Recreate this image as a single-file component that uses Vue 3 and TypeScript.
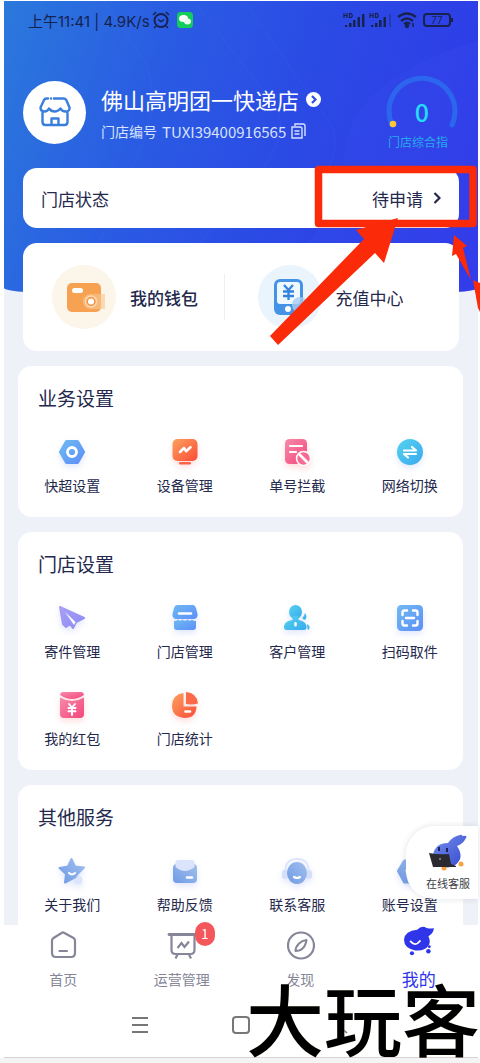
<script setup lang="ts">
interface Entry {
  icon: string
  label: string
}
interface Section {
  title: string
  entries: Entry[]
}
interface Tab extends Entry {
  badge?: number
  active?: boolean
}

const sections: Section[] = [
  {
    title: '业务设置',
    entries: [
      { icon: 'hex', label: '快超设置' },
      { icon: 'device', label: '设备管理' },
      { icon: 'block', label: '单号拦截' },
      { icon: 'switch', label: '网络切换' },
    ],
  },
  {
    title: '门店设置',
    entries: [
      { icon: 'plane', label: '寄件管理' },
      { icon: 'shop', label: '门店管理' },
      { icon: 'people', label: '客户管理' },
      { icon: 'scan', label: '扫码取件' },
      { icon: 'packet', label: '我的红包' },
      { icon: 'pie', label: '门店统计' },
    ],
  },
  {
    title: '其他服务',
    entries: [
      { icon: 'star', label: '关于我们' },
      { icon: 'mail', label: '帮助反馈' },
      { icon: 'headset', label: '联系客服' },
      { icon: 'account', label: '账号设置' },
    ],
  },
]

const tabs: Tab[] = [
  { icon: 'home', label: '首页' },
  { icon: 'board', label: '运营管理', badge: 1 },
  { icon: 'compass', label: '发现' },
  { icon: 'mascot', label: '我的', active: true },
]
</script>

<template>
  <div class="page">
    <svg class="sprite" width="0" height="0" aria-hidden="true">
      <defs>
        <linearGradient id="g-blue" x1="0" y1="0" x2="1" y2="1"><stop offset="0" stop-color="#70b9f2" /><stop offset="1" stop-color="#5c8ff8" /></linearGradient>
        <linearGradient id="g-orange" x1="0" y1="0" x2="1" y2="1"><stop offset="0" stop-color="#fba25e" /><stop offset="1" stop-color="#fb4b37" /></linearGradient>
        <linearGradient id="g-pink" x1="0" y1="0" x2="1" y2="1"><stop offset="0" stop-color="#f58bab" /><stop offset="1" stop-color="#f5457c" /></linearGradient>
        <linearGradient id="g-cyan" x1="0" y1="0" x2="1" y2="1"><stop offset="0" stop-color="#55d3ee" /><stop offset="1" stop-color="#39a9ee" /></linearGradient>
        <linearGradient id="g-violet" x1="0" y1="0" x2="1" y2="1"><stop offset="0" stop-color="#a99ff5" /><stop offset="1" stop-color="#8d8bf4" /></linearGradient>
        <linearGradient id="g-soft" x1="0" y1="1" x2="1" y2="0"><stop offset="0" stop-color="#6f9be4" /><stop offset="1" stop-color="#a3c0ee" /></linearGradient>
        <linearGradient id="g-mascot" x1="0" y1="0" x2="1" y2="1"><stop offset="0" stop-color="#7490ee" /><stop offset="1" stop-color="#3548cc" /></linearGradient>
      </defs>
      <symbol id="i-hex" viewBox="0 0 30 30">
        <path d="M9.500 4.500h11L26.500 15l-6 10.500h-11L3.500 15z" fill="url(#g-blue)" stroke="url(#g-blue)" stroke-width="3" stroke-linejoin="round" />
        <circle cx="15" cy="15" r="4.500" fill="none" stroke="#fff" stroke-width="2.800" />
      </symbol>
      <symbol id="i-device" viewBox="0 0 30 30">
        <rect x="2.500" y="2" width="25" height="22" rx="5" fill="url(#g-orange)" />
        <rect x="9" y="25" width="12" height="2.500" rx="1.200" fill="#fb6347" />
        <path d="M10 15l4-4 2 3.200 4.500-4" fill="none" stroke="#fff" stroke-width="2.500" stroke-linecap="round" stroke-linejoin="round" />
      </symbol>
      <symbol id="i-block" viewBox="0 0 30 30">
        <rect x="3" y="2" width="22" height="25" rx="4.500" fill="url(#g-pink)" />
        <path d="M8 9h12M8 15h6" stroke="#fff" stroke-width="2.200" stroke-linecap="round" />
        <circle cx="21.500" cy="21.500" r="7" fill="#f56b95" stroke="#fff" stroke-width="1.500" />
        <path d="M17 17l9 9" stroke="#fff" stroke-width="2.600" />
      </symbol>
      <symbol id="i-switch" viewBox="0 0 30 30">
        <circle cx="15" cy="15" r="13" fill="url(#g-cyan)" />
        <path d="M9 13.500h12l-4-3.500M21 17H9l4 3.500" fill="none" stroke="#fff" stroke-width="2.200" stroke-linecap="round" stroke-linejoin="round" />
      </symbol>
      <symbol id="i-plane" viewBox="0 0 30 30">
        <path d="M3 4l24 11-8 4-3 6-3-4-4 3-3-3z" fill="url(#g-violet)" stroke="url(#g-violet)" stroke-width="2" stroke-linejoin="round" />
        <path d="M8 9l9 13 1.500-3z" fill="#fff" />
      </symbol>
      <symbol id="i-shop" viewBox="0 0 30 30">
        <path d="M7 2h16q2 0 3 3l1.500 6q.5 4-3 5h-19q-3.500-1-3-5L4 5q1-3 3-3z" fill="url(#g-blue)" />
        <path d="M4 18q3 0 4-1.500 2 2.500 4.500 0 2.500 2.500 5 0 2.500 2.500 4.500 0 1 1.500 4 1.500v6q0 3-3 3H7q-3 0-3-3z" fill="url(#g-blue)" />
        <path d="M9 10.500h12" stroke="#fff" stroke-width="2.400" stroke-linecap="round" />
      </symbol>
      <symbol id="i-people" viewBox="0 0 30 30">
        <ellipse cx="13.500" cy="9" rx="6.500" ry="7" fill="url(#g-cyan)" />
        <path d="M10.500 13h6v4q7 1 8 6v1.500q0 2.500-3 2.500H5q-3 0-3-2.500V23q1-5 8.500-6z" fill="url(#g-cyan)" />
        <rect x="12.300" y="19" width="2.400" height="4.500" rx="1.200" fill="#fff" />
        <path d="M23 10q3 4 0 7-3-.5-2.500-2.500 2-1.500 2.500-4.500zM25 21q4 2 2 5.500h-1.500z" fill="#44b8ee" />
      </symbol>
      <symbol id="i-scan" viewBox="0 0 30 30">
        <rect x="2" y="2" width="26" height="26" rx="4.500" fill="url(#g-blue)" />
        <path d="M12 7.500H9.500q-2 0-2 2V12M18 7.500h2.500q2 0 2 2V12M7.500 18v2.500q0 2 2 2H12M22.500 18v2.500q0 2-2 2H18M11 15h8" fill="none" stroke="#fff" stroke-width="2.400" stroke-linecap="round" />
      </symbol>
      <symbol id="i-packet" viewBox="0 0 30 30">
        <path d="M6 2h18q2.500 0 3 3-12 8-24 0 .5-3 3-3z" fill="url(#g-pink)" />
        <path d="M3 7.500q12 7 24 0V24q0 4-4 4H7q-4 0-4-4z" fill="url(#g-pink)" />
        <path d="M12 14l3 3.500 3-3.500M15 17.500V25M11.500 18h7M11.500 21.300h7" fill="none" stroke="#fff" stroke-width="1.900" stroke-linecap="round" />
      </symbol>
      <symbol id="i-pie" viewBox="0 0 30 30">
        <path d="M13.500 3v13.500h13Q26 28 14.500 28 2 27 2 15.500 2.500 4.500 13.500 3z" fill="url(#g-orange)" />
        <path d="M16 2q11 1 12 11.500-6 1.500-12 .5z" fill="#fb6a48" />
        <path d="M15.500 21.500H20" stroke="#fff" stroke-width="2.600" stroke-linecap="round" />
      </symbol>
      <symbol id="i-star" viewBox="0 0 30 30">
        <circle cx="21" cy="24" r="4.500" fill="#dbe5fb" />
        <path d="M14.500 3l3.500 7.500 9 1-6.500 6.500-2 3-10.500 5.500 1-8.500L2.500 12l8.500-1.500z" fill="url(#g-soft)" stroke="url(#g-soft)" stroke-width="2" stroke-linejoin="round" />
        <path d="M12 17q3 3 6 0" fill="none" stroke="#fff" stroke-width="2" stroke-linecap="round" />
      </symbol>
      <symbol id="i-mail" viewBox="0 0 30 30">
        <rect x="3" y="8" width="24" height="19" rx="4" fill="url(#g-soft)" />
        <path d="M8 4h14q2 0 2.500 2v5Q15 19 5.500 11V6Q6 4 8 4z" fill="#dbe3fd" />
        <path d="M17 21.500h5" stroke="#fff" stroke-width="2.400" stroke-linecap="round" />
      </symbol>
      <symbol id="i-headset" viewBox="0 0 30 30">
        <path d="M3.500 18Q2 3 15 3t11.500 15" fill="none" stroke="#dfe5fb" stroke-width="2" />
        <rect x="0" y="14" width="6" height="9" rx="3" fill="#d5dffa" /><rect x="24" y="14" width="6" height="9" rx="3" fill="#d5dffa" />
        <ellipse cx="15" cy="17" rx="10" ry="11" fill="url(#g-soft)" />
        <path d="M12 21q3 2 6 0" fill="none" stroke="#fff" stroke-width="2.200" stroke-linecap="round" />
      </symbol>
      <symbol id="i-account" viewBox="0 0 30 30">
        <path d="M9.500 5h11l6 10-6 11h-11l-6-11z" fill="url(#g-soft)" stroke="url(#g-soft)" stroke-width="3" stroke-linejoin="round" />
        <circle cx="15" cy="15" r="4.500" fill="#fff" />
      </symbol>
      <symbol id="i-home" viewBox="0 0 30 30">
        <path d="M4 10.500q0-1.500 1.500-2.500L14 2.700q1-.6 2 0L25.500 8Q27 9 27 10.500V23q0 4-4 4H8q-4 0-4-4z" fill="none" stroke="#858799" stroke-width="2.200" />
        <path d="M11.500 21h7.500" stroke="#858799" stroke-width="2.200" stroke-linecap="round" />
      </symbol>
      <symbol id="i-board" viewBox="0 0 30 30">
        <path d="M2 4.500h27" stroke="#858799" stroke-width="2.800" stroke-linecap="round" />
        <path d="M4.500 5v15q0 4 4 4h15q4 0 4-4V5M10.500 24.500l-2 4M22 24.500l2 4M10.500 18l4-5 3 4 4.500-5.500" fill="none" stroke="#858799" stroke-width="2.200" />
      </symbol>
      <symbol id="i-compass" viewBox="0 0 30 30">
        <circle cx="16" cy="15.500" r="13" fill="none" stroke="#858799" stroke-width="2.200" />
        <path d="M21.500 10q-1 6-4 8.500-2.500 2.500-7 2.500 0-4 3.500-7.500Q17 10.500 21.500 10z" fill="none" stroke="#858799" stroke-width="2" stroke-linejoin="round" />
      </symbol>
      <symbol id="i-mascot" viewBox="0 0 32 32">
        <path d="M14 4q5-5 10-2 4 1 8 .5-1 6-6 8.500 3 6 0 10-4 6-14 5Q0 24 0 14.500 1 5 14 4z" fill="#2f35e8" />
        <path d="M7 16.500q5 6 10-.5" fill="none" stroke="#fff" stroke-width="2" stroke-linecap="round" />
        <circle cx="8.500" cy="29" r="2.200" fill="#2f35e8" /><circle cx="26" cy="27" r="2.400" fill="#2f35e8" /><circle cx="27" cy="22" r="1.500" fill="#2f35e8" />
      </symbol>
    </svg>

    <main class="screen">
      <div class="hero">
        <svg viewBox="0 0 474 298" preserveAspectRatio="none" aria-hidden="true">
          <path d="M100 0l40 60q16 30 0 80l-70 158M190 0l80 104q20 30-20 74L150 298M240 0l84 120q24 30-30 90" fill="none" stroke="#6d9cff" stroke-opacity=".1" />
          <path d="M474 40Q340 80 340 160q0 60-90 138h224z" fill="#4652f5" fill-opacity=".14" />
        </svg>
      </div>

      <header class="statusbar">
        <span class="clock">上午11:41 | 4.9K/s</span>
        <svg width="18" height="18" viewBox="0 0 18 18" fill="none" stroke="#17224f" stroke-width="2"><circle cx="9" cy="9.500" r="6.500" /><path d="M1 4l3-3M17 4l-3-3M6 8.500l3 2 3-2M4 15l-2 2M14 15l2 2" stroke-width="1.500" /></svg>
        <svg class="chat" width="16" height="16" viewBox="0 0 16 16"><rect width="16" height="16" rx="3.500" fill="#12cc5c" /><ellipse cx="6.500" cy="6.500" rx="4.500" ry="3.500" fill="#fff" /><ellipse cx="10.500" cy="9.500" rx="3.500" ry="3" fill="#e6fbed" /></svg>
        <span class="signals">
          <svg width="50" height="18" viewBox="0 0 50 18" fill="#17224f">
            <path d="M2 14h2.200v2H2zM6 12h2.500v4H6zM10 9h2.500v7H10zM14.500 6h2.500v10h-2.500zM19 3h2.500v13H19zM28 14h2.200v2H28zM32 12h2.500v4H32zM36 9h2.500v7H36zM40.500 6h2.500v10h-2.500z" />
            <path d="M46 3h2v13h-2z" opacity=".35" />
            <path d="M1 2v5M4 2v5M1 4.500h3M6.500 2.500h2q1.500 2 0 4h-2zM27 2v5M30 2v5M27 4.500h3M32.500 2.500h2q1.500 2 0 4h-2z" fill="none" stroke="#17224f" stroke-width="1.200" />
          </svg>
          <svg width="20" height="18" viewBox="0 0 20 18" fill="none" stroke="#17224f" stroke-width="2.400"><path d="M1 6q9-7 18 0M4 10q6-5 12 0M7 13q3-2.500 6 0" /><circle cx="10" cy="15" r="1" /><path d="M16 12v4" stroke-width="1.500" /></svg>
          <span class="battery">77</span>
        </span>
      </header>

      <section class="profile">
        <div class="avatar">
          <svg width="32" height="32" viewBox="0 0 32 32" fill="none" stroke="#3b7fdd" stroke-width="2.400" stroke-linecap="round" stroke-linejoin="round">
            <path d="M9 2.500H7.500q-2 0-2.700 2L1.500 11.500q0 4 4 4 3 0 4.500-3 2 3 5.500 3t6-3q1.500 3 5 3 4.500 0 4-4l-3-7q-.7-2-2.700-2H15M12 2.500h.1M3.500 17v9q0 3 3 3h19q3 0 3-3v-9M12.500 28.500V22.500h7v6" />
          </svg>
        </div>
        <div class="identity">
          <button class="name">
            佛山高明团一快递店
            <svg width="15" height="15" viewBox="0 0 15 15"><circle cx="7.500" cy="7.500" r="7.500" fill="#fff" /><path d="M6 4l3.500 3.500L6 11" fill="none" stroke="#2b50df" stroke-width="2.200" /></svg>
          </button>
          <div class="code">
            <span>门店编号</span>
            <span class="number">TUXI39400916565</span>
            <button aria-label="复制">
              <svg width="15" height="16" viewBox="0 0 15 16" fill="none" stroke="#d7e2ff" stroke-width="1.400"><path d="M4 3V1h8q2 0 2 2v10M1 4h8q2 0 2 2v9H1zM3.500 8h5M3.500 11h5" /></svg>
            </button>
          </div>
        </div>
        <div class="score">
          <svg viewBox="0 0 72 60" width="72" height="60" fill="none">
            <path d="M6 51A33 33 0 1 1 66 51" stroke="#2c66ee" stroke-width="5" stroke-linecap="round" />
            <circle cx="7" cy="50" r="3.300" fill="#ffc83a" />
          </svg>
          <strong>0</strong>
          <span>门店综合指</span>
        </div>
      </section>

      <button class="card state">
        <span>门店状态</span>
        <span class="pending">待申请
          <svg width="8" height="12" viewBox="0 0 8 12"><path d="M1.500 1l5 5-5 5" fill="none" stroke="#23284c" stroke-width="2.200" /></svg>
        </span>
      </button>

      <section class="card funds">
        <button class="wallet">
          <svg width="64" height="64" viewBox="0 0 64 64">
            <circle cx="32" cy="32" r="32" fill="#fcf5e9" />
            <rect x="15" y="18" width="34" height="29" rx="5" fill="#f6a252" />
            <rect x="20" y="23" width="11" height="5" rx="2.500" fill="#fff" />
            <path d="M38 29h15v15H38q-7-1-7-7.500t7-7.500z" fill="#f9c792" fill-opacity=".6" />
            <circle cx="39" cy="36.500" r="5.500" fill="#f3994b" stroke="#fcd9b3" stroke-width="1.500" /><circle cx="39" cy="36.500" r="3" fill="#fff" />
          </svg>
          <span>我的钱包</span>
        </button>
        <button class="recharge">
          <svg width="64" height="64" viewBox="0 0 64 64">
            <circle cx="32" cy="32" r="32" fill="#eaf4fc" />
            <rect x="16" y="14" width="29" height="36" rx="6" fill="#4592e6" />
            <rect x="19" y="17" width="23" height="22" rx="3" fill="#eff8ff" />
            <path d="M26 20l4.500 5 4.500-5M30.500 25v10M25 26.500h11M25 31h11" fill="none" stroke="#3484df" stroke-width="2.300" />
            <circle cx="30" cy="44" r="3" fill="#fff" /><circle cx="42" cy="40" r="8" fill="#a9cdf4" fill-opacity=".8" />
          </svg>
          <span>充值中心</span>
        </button>
      </section>

      <section v-for="section in sections" :key="section.title" class="card group">
        <h2>{{ section.title }}</h2>
        <div class="entries">
          <button v-for="entry in section.entries" :key="entry.label" class="entry">
            <svg :class="['glyph', entry.icon]" width="30" height="30"><use :href="'#i-' + entry.icon" /></svg>
            <span>{{ entry.label }}</span>
          </button>
        </div>
      </section>

      <button class="support">
        <svg width="38" height="38" viewBox="0 0 38 38">
          <path d="M19 9q5-7 12-8 3-1 2 1 6-1 4 2-3 6-9 8 6 9 2 15-5 8-16 6Q4 30 4 21 6 9 19 9z" fill="url(#g-mascot)" />
          <path d="M10 13v4M18 14v4" stroke="#1a2258" stroke-width="2" />
          <circle cx="15" cy="34" r="2.500" fill="#f7a23e" /><circle cx="32" cy="30" r="2.500" fill="#f7a23e" />
          <path d="M0 19q10 2 20 1l2 10 5 2v1H4z" fill="#2a2a30" /><circle cx="11" cy="25" r="1" fill="#999" />
        </svg>
        <span>在线客服</span>
      </button>

      <nav class="tabs">
        <a v-for="tab in tabs" :key="tab.label" href="#" :class="{ active: tab.active }">
          <span class="tab-icon">
            <svg width="30" height="30"><use :href="'#i-' + tab.icon" /></svg>
            <b v-if="tab.badge">{{ tab.badge }}</b>
          </span>
          <span>{{ tab.label }}</span>
        </a>
      </nav>

      <footer class="system">
        <button aria-label="菜单"><svg width="18" height="18" viewBox="0 0 18 18"><path d="M1 2h16M1 9h16M1 16h16" stroke="#77777a" stroke-width="2" /></svg></button>
        <button aria-label="主屏幕"><svg width="18" height="18" viewBox="0 0 18 18"><rect x="1" y="1" width="16" height="16" rx="3" fill="none" stroke="#77777a" stroke-width="2" /></svg></button>
        <button aria-label="返回"><svg width="18" height="18" viewBox="0 0 18 18"><path d="M14 1L5 9l9 8" fill="none" stroke="#77777a" stroke-width="1.600" /></svg></button>
      </footer>
    </main>

    <svg class="marks" width="216" height="190" viewBox="0 0 216 190" aria-hidden="true">
      <path d="M54.500 9.500h154.500v54H54.500z" fill="none" stroke="#fb2a08" stroke-width="7.500" stroke-linejoin="round" />
      <path d="M134 58L92 70l8 9-94 97 8 9 97-92 9 10z" fill="#fb2a08" />
      <path d="M190 75l13 11-4 2 8 32-15-26-4 2z" fill="#fb2a08" />
      <path d="M209 120l7 3v29l-2-4z" fill="#fb2a08" />
    </svg>
    <div class="watermark">大玩客</div>
  </div>
</template>

<style>
body {
  margin: 0;
  background: #f5f5f5;
}
</style>

<style scoped>
.page {
  position: relative;
  overflow: hidden;
  padding: 1px 2px 6px 4px;
  background: linear-gradient(#fff, #fff) top / 100% calc(100% - 6px) no-repeat #f4f4f4;
  font-family: "Noto Sans CJK SC", "Noto Sans", sans-serif;
  color: #23284c;
}
.sprite {
  position: absolute;
}
.screen {
  position: relative;
  display: flex;
  flex-direction: column;
  background: #eef1f7;
}
button {
  padding: 0;
  border: 0;
  background: none;
  font: inherit;
  color: inherit;
  text-align: left;
}
svg {
  display: block;
  flex: none;
}
.hero {
  position: absolute;
  inset: 0 0 auto;
  height: 297px;
  overflow: hidden;
  border-radius: 0 0 50% 50% / 0 0 10px 10px;
  background: linear-gradient(108deg, #2b79dc 0%, #2a5ce3 30%, #2b49e5 60%, #3038e8 100%);
}
.hero svg {
  width: 100%;
  height: 100%;
}
.statusbar {
  position: relative;
  display: flex;
  align-items: center;
  height: 38px;
  padding: 0 27px 0 24px;
  gap: 2px;
  font-family: Inter, "Noto Sans CJK SC", sans-serif;
  font-size: 15px;
  color: #17224f;
}
.chat {
  margin-left: 5px;
}
.signals {
  display: flex;
  align-items: center;
  gap: 4px;
  margin-left: auto;
}
.battery {
  position: relative;
  box-sizing: border-box;
  width: 28px;
  height: 14px;
  margin-left: 2px;
  border: 2px solid #17224f;
  border-radius: 4px;
  font-size: 10px;
  line-height: 10px;
  text-align: center;
}
.battery::after {
  content: "";
  position: absolute;
  right: -4px;
  top: 3px;
  width: 2px;
  height: 4px;
  background: #17224f;
}
.profile {
  position: relative;
  display: flex;
  align-items: center;
  gap: 15px;
  height: 64px;
  margin: 41px 20px 24px 19px;
  color: #fff;
}
.avatar {
  display: grid;
  place-items: center;
  width: 63px;
  height: 63px;
  border-radius: 50%;
  background: #fff;
}
.identity {
  flex: 1;
  padding-top: 6px;
}
.name {
  display: flex;
  align-items: center;
  gap: 7px;
  font-size: 22px;
  line-height: 32px;
  white-space: nowrap;
}
.code {
  display: flex;
  align-items: center;
  gap: 5px;
  height: 32px;
  font-size: 14px;
  color: #d7e2ff;
}
.number {
  font-size: 15px;
}
.score {
  position: relative;
  display: flex;
  flex-direction: column;
  align-items: center;
  width: 72px;
}
.score strong {
  position: absolute;
  top: 21px;
  font-size: 25px;
  line-height: 32px;
  font-weight: 500;
  color: #25dcfa;
}
.score span {
  margin-right: 8px;
  font-size: 12px;
  line-height: 16px;
  color: #27a9ee;
}
.card {
  position: relative;
  border-radius: 14px;
  background: #fff;
}
.state {
  display: flex;
  align-items: center;
  justify-content: space-between;
  height: 60px;
  margin: 0 19px 15px;
  padding: 0 18px;
  font-size: 17px;
}
.pending {
  display: flex;
  align-items: center;
  gap: 10px;
}
.funds {
  display: flex;
  align-items: center;
  height: 108px;
  margin: 0 19px;
  font-size: 17px;
}
.funds button {
  display: flex;
  align-items: center;
  gap: 14px;
}
.wallet {
  box-sizing: border-box;
  width: 46%;
  padding-left: 29px;
}
.wallet span {
  font-weight: 500;
}
.recharge {
  position: relative;
}
.funds .recharge {
  height: 46px;
  padding-left: 33px;
  border-left: 1px solid #eeeff3;
}
.group {
  margin: 15px 15px 0 14px;
  padding: 18px 0 22px;
}
.group:nth-last-of-type(1) {
  padding-bottom: 11px;
  border-radius: 14px 14px 0 0;
}
h2 {
  margin: 0 0 25px 20px;
  font-size: 19px;
  line-height: 28px;
  font-weight: 400;
}
.entries {
  display: grid;
  grid-template-columns: repeat(4, 1fr);
  row-gap: 29px;
  margin: 0 -3px 0 -2px;
}
.entry {
  display: flex;
  flex-direction: column;
  align-items: center;
  gap: 8px;
  font-size: 14px;
  line-height: 20px;
}
.glyph {
  overflow: visible;
  filter: drop-shadow(0 3px 3px rgba(90, 120, 240, 0.18));
}
.device,
.block,
.packet,
.pie {
  filter: drop-shadow(0 3px 3px rgba(250, 80, 80, 0.2));
}
.support {
  position: absolute;
  right: 0;
  bottom: 159px;
  display: flex;
  flex-direction: column;
  align-items: center;
  gap: 3px;
  box-sizing: border-box;
  width: 72px;
  height: 73px;
  padding: 8px 0 0 12px;
  border-radius: 28px 0 0 28px;
  background: #fff;
  box-shadow: 0 0 6px rgba(40, 50, 90, 0.14);
  font-size: 11px;
  line-height: 16px;
  color: #3c3d46;
}
.tabs {
  display: grid;
  grid-template-columns: repeat(4, 1fr);
  height: 67px;
  background: #fff;
}
.tabs a {
  display: flex;
  flex-direction: column;
  align-items: center;
  gap: 9px;
  padding-top: 5px;
  font-size: 14px;
  line-height: 20px;
  color: #858799;
  text-decoration: none;
}
.tabs .active {
  font-size: 17px;
  color: #2f35e8;
}
.tab-icon {
  position: relative;
}
.active .tab-icon {
  margin-top: -4px;
  margin-bottom: 4px;
}
.tab-icon b {
  position: absolute;
  left: 28px;
  top: -8px;
  width: 20px;
  height: 24px;
  border-radius: 10px;
  background: #f3575b;
  font-size: 13px;
  line-height: 24px;
  font-weight: 400;
  text-align: center;
  color: #fff;
}
.system {
  display: flex;
  align-items: center;
  justify-content: center;
  gap: 83px;
  height: 66px;
  box-sizing: border-box;
  border-bottom: 1px solid #d4d4d4;
  background: #fff;
}
.marks {
  position: absolute;
  top: 160px;
  right: 0;
  width: 216px;
}
.watermark {
  position: absolute;
  right: 0;
  bottom: 8px;
  font-size: 78px;
  line-height: 78px;
  font-weight: 500;
  color: #000;
  white-space: nowrap;
  text-shadow: 0 0 1px #fff6d8;
}
</style>
